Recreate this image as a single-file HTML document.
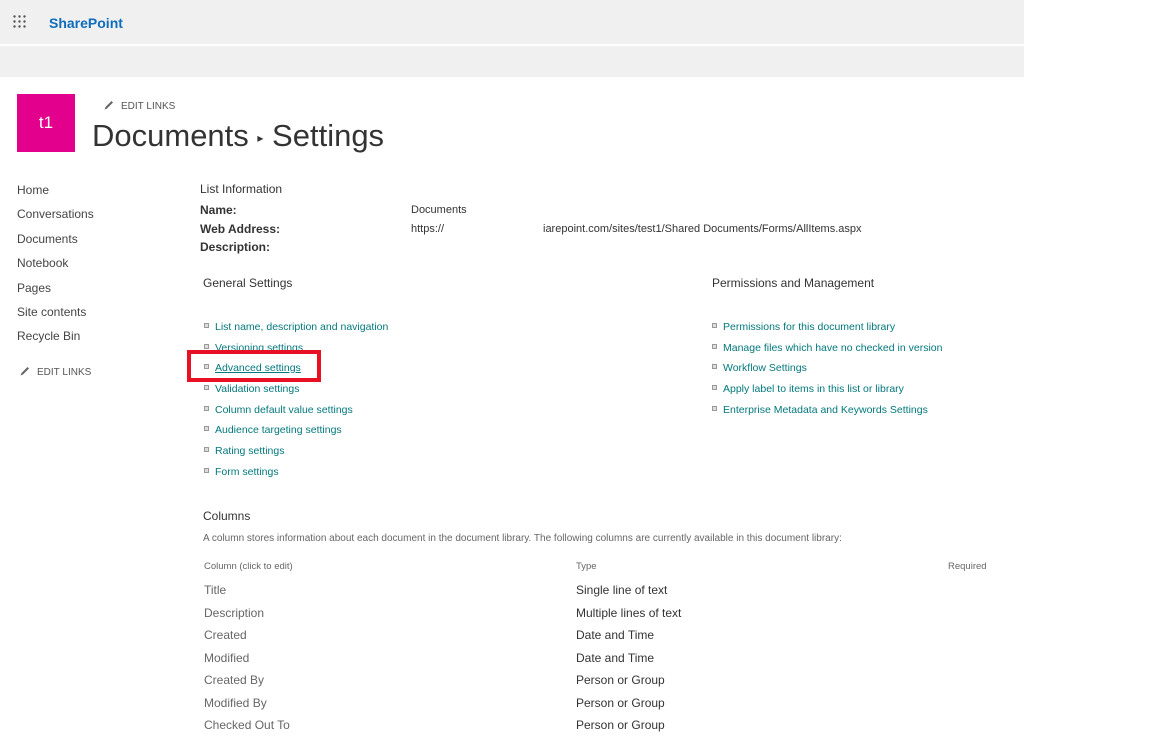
<!DOCTYPE html>
<html><head><style>
*{margin:0;padding:0;box-sizing:border-box}
body{width:1152px;height:745px;background:#fff;font-family:"Liberation Sans",sans-serif;color:#333;position:relative;overflow:hidden;font-size:11px}
.a{position:absolute;white-space:nowrap}
.lnk{color:#03787c;font-size:10.5px}
.bul{position:absolute;width:5px;height:5px;border:1px solid #999;background:#ddd}
.nav{color:#444;font-size:12px}
.g{color:#666}
</style></head><body>
<div class="a" style="left:0;top:0;width:1024px;height:44px;background:#f0f0f0"></div>
<div class="a" style="left:0;top:46px;width:1024px;height:31px;background:#f0f0f0"></div>
<svg class="a" style="left:13px;top:15px" width="14" height="14"><g fill="#555"><circle cx="1.5" cy="1.5" r="1.2"/><circle cx="6.5" cy="1.5" r="1.2"/><circle cx="11.5" cy="1.5" r="1.2"/><circle cx="1.5" cy="6.5" r="1.2"/><circle cx="6.5" cy="6.5" r="1.2"/><circle cx="11.5" cy="6.5" r="1.2"/><circle cx="1.5" cy="11.5" r="1.2"/><circle cx="6.5" cy="11.5" r="1.2"/><circle cx="11.5" cy="11.5" r="1.2"/></g></svg>
<div class="a" style="left:49px;top:15px;font-size:14px;font-weight:bold;color:#0f6cbd">SharePoint</div>
<div class="a" style="left:17px;top:94px;width:58px;height:58px;background:#e3008c;color:#fff;font-size:17px;text-align:center;line-height:58px">t1</div>
<svg class="a" style="left:104px;top:100px" width="10" height="10"><path d="M0.5 9.5 L1.5 7 L7.5 1 L9 2.5 L3 8.5 Z" fill="#666"/></svg>
<div class="a" style="left:121px;top:101px;font-size:10px;color:#555">EDIT LINKS</div>
<div class="a" style="left:92px;top:118px;font-size:31px;color:#333;font-weight:300">Documents <span style="font-size:12px;vertical-align:middle">▸</span> Settings</div>
<div class="a nav" style="left:17px;top:183px">Home</div>
<div class="a nav" style="left:17px;top:207px">Conversations</div>
<div class="a nav" style="left:17px;top:232px">Documents</div>
<div class="a nav" style="left:17px;top:256px">Notebook</div>
<div class="a nav" style="left:17px;top:281px">Pages</div>
<div class="a nav" style="left:17px;top:305px">Site contents</div>
<div class="a nav" style="left:17px;top:329px">Recycle Bin</div>
<svg class="a" style="left:20px;top:366px" width="10" height="10"><path d="M0.5 9.5 L1.5 7 L7.5 1 L9 2.5 L3 8.5 Z" fill="#666"/></svg>
<div class="a" style="left:37px;top:367px;font-size:10px;color:#555">EDIT LINKS</div>
<div class="a" style="left:200px;top:182px;font-size:12px">List Information</div>
<div class="a" style="left:200px;top:203px;font-weight:bold;font-size:12px">Name:</div>
<div class="a" style="left:200px;top:222px;font-weight:bold;font-size:12px">Web Address:</div>
<div class="a" style="left:200px;top:240px;font-weight:bold;font-size:12px">Description:</div>
<div class="a" style="left:411px;top:204px">Documents</div>
<div class="a" style="left:411px;top:223px">https://</div>
<div class="a" style="left:543px;top:223px">iarepoint.com/sites/test1/Shared Documents/Forms/AllItems.aspx</div>
<div class="a" style="left:203px;top:276px;font-size:12px">General Settings</div>
<div class="a" style="left:712px;top:276px;font-size:12px">Permissions and Management</div>
<div class="bul" style="left:204px;top:323px"></div><div class="a lnk" style="left:215px;top:321px">List name, description and navigation</div>
<div class="bul" style="left:204px;top:344px"></div><div class="a lnk" style="left:215px;top:342px">Versioning settings</div>
<div class="bul" style="left:204px;top:364px"></div><div class="a lnk" style="left:215px;top:362px;text-decoration:underline">Advanced settings</div>
<div class="bul" style="left:204px;top:385px"></div><div class="a lnk" style="left:215px;top:383px">Validation settings</div>
<div class="bul" style="left:204px;top:406px"></div><div class="a lnk" style="left:215px;top:404px">Column default value settings</div>
<div class="bul" style="left:204px;top:426px"></div><div class="a lnk" style="left:215px;top:424px">Audience targeting settings</div>
<div class="bul" style="left:204px;top:447px"></div><div class="a lnk" style="left:215px;top:445px">Rating settings</div>
<div class="bul" style="left:204px;top:468px"></div><div class="a lnk" style="left:215px;top:466px">Form settings</div>
<div class="a" style="left:187px;top:350px;width:134px;height:32px;border:4px solid #e81123"></div>
<div class="bul" style="left:712px;top:323px"></div><div class="a lnk" style="left:723px;top:321px">Permissions for this document library</div>
<div class="bul" style="left:712px;top:344px"></div><div class="a lnk" style="left:723px;top:342px">Manage files which have no checked in version</div>
<div class="bul" style="left:712px;top:364px"></div><div class="a lnk" style="left:723px;top:362px">Workflow Settings</div>
<div class="bul" style="left:712px;top:385px"></div><div class="a lnk" style="left:723px;top:383px">Apply label to items in this list or library</div>
<div class="bul" style="left:712px;top:406px"></div><div class="a lnk" style="left:723px;top:404px">Enterprise Metadata and Keywords Settings</div>
<div class="a" style="left:203px;top:509px;font-size:12px">Columns</div>
<div class="a g" style="left:203px;top:533px;font-size:10px">A column stores information about each document in the document library. The following columns are currently available in this document library:</div>
<div class="a g" style="left:204px;top:561px;font-size:9.5px">Column (click to edit)</div>
<div class="a g" style="left:576px;top:561px;font-size:9.5px">Type</div>
<div class="a g" style="left:948px;top:561px;font-size:9.5px">Required</div>
<div class="a g" style="left:204px;top:583px;font-size:12px">Title</div><div class="a" style="left:576px;top:583px;font-size:12px">Single line of text</div>
<div class="a g" style="left:204px;top:606px;font-size:12px">Description</div><div class="a" style="left:576px;top:606px;font-size:12px">Multiple lines of text</div>
<div class="a g" style="left:204px;top:628px;font-size:12px">Created</div><div class="a" style="left:576px;top:628px;font-size:12px">Date and Time</div>
<div class="a g" style="left:204px;top:651px;font-size:12px">Modified</div><div class="a" style="left:576px;top:651px;font-size:12px">Date and Time</div>
<div class="a g" style="left:204px;top:673px;font-size:12px">Created By</div><div class="a" style="left:576px;top:673px;font-size:12px">Person or Group</div>
<div class="a g" style="left:204px;top:696px;font-size:12px">Modified By</div><div class="a" style="left:576px;top:696px;font-size:12px">Person or Group</div>
<div class="a g" style="left:204px;top:718px;font-size:12px">Checked Out To</div><div class="a" style="left:576px;top:718px;font-size:12px">Person or Group</div>
</body></html>
